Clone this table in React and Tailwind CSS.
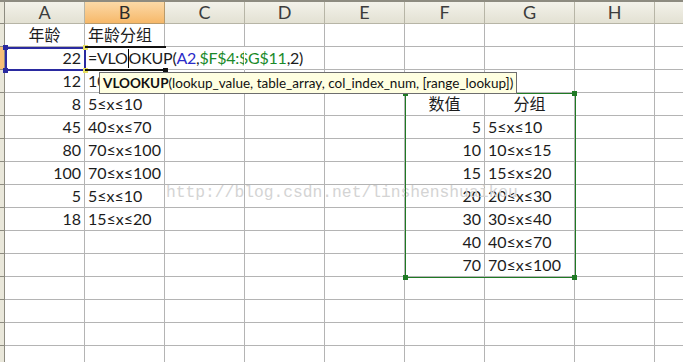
import React from 'react'

// column letters with their widths, as in the sheet
const COLS = [
  { key: 'A', w: 'w-[80px]' },
  { key: 'B', w: 'w-[80px]' },
  { key: 'C', w: 'w-[80px]' },
  { key: 'D', w: 'w-[80px]' },
  { key: 'E', w: 'w-[80px]' },
  { key: 'F', w: 'w-[80px]' },
  { key: 'G', w: 'w-[90px]' },
  { key: 'H', w: 'w-[80px]' },
  { key: 'I', w: 'w-[80px]' },
]

const FORMULA = 'formula'

// [A, B, F, G]
const ROWS = [
  ['年龄', '年龄分组', '', ''],
  ['22', FORMULA, '', ''],
  ['12', '10≤x≤15', '', ''],
  ['8', '5≤x≤10', '数值', '分组'],
  ['45', '40≤x≤70', '5', '5≤x≤10'],
  ['80', '70≤x≤100', '10', '10≤x≤15'],
  ['100', '70≤x≤100', '15', '15≤x≤20'],
  ['5', '5≤x≤10', '20', '20≤x≤30'],
  ['18', '15≤x≤20', '30', '30≤x≤40'],
  ['', '', '40', '40≤x≤70'],
  ['', '', '70', '70≤x≤100'],
  ['', '', '', ''],
  ['', '', '', ''],
  ['', '', '', ''],
  ['', '', '', ''],
]

const isNum = (v) => /^\d+$/.test(v)

const Formula = () => (
  <span className="whitespace-nowrap tracking-[-0.25px]">
    =VLO<span className="inline-block w-px h-[19px] bg-black align-[-4px]" />OKUP(
    <span className="text-[#2b2bc8]">A2</span>,
    <span className="text-[#1a8a2a]">$F$4:$G$11</span>,2)
  </span>
)

// noRight: text overflowing from the left hides the gridline
const Cell = ({ value, w, noRight }) => {
  const cjk = value === '年龄' || value === '数值' || value === '分组'
  let align = 'justify-start pl-[3px]'
  if (isNum(value)) align = 'justify-end pr-[3px]'
  else if (cjk) align = 'justify-center'
  return (
    <div
      className={`${w} shrink-0 h-[23px] border-b flex items-center overflow-visible border-[#b4b4b4] ${
        noRight ? 'border-r border-r-white' : 'border-r'
      } ${align}`}
    >
      {value === FORMULA ? <Formula /> : <span className="whitespace-nowrap">{value}</span>}
    </div>
  )
}

const Handle = ({ className }) => <div className={`absolute w-[5px] h-[5px] ${className}`} />

export default function App() {
  return (
    <div className="w-[683px] h-[362px] overflow-hidden bg-white font-['Lato','Noto_Sans_CJK_SC',sans-serif] text-[16px] text-[#1c1c1c]">
      <div className="relative w-max">
        {/* column header */}
        <div className="flex h-[24px] border-t-2 border-[#8d8b80]">
          <div className="w-[5px] shrink-0 bg-[#e9e7da] border-r border-b border-[#8d8b80]" />
          {COLS.map((c) => (
            <div
              key={c.key}
              className={`${c.w} shrink-0 flex items-center justify-center border-r border-b text-[18px] ${
                c.key === 'B'
                  ? 'bg-linear-to-b from-[#fbd9a6] to-[#f6b869] border-[#b99a6a] text-[#2a2a2a]'
                  : 'bg-linear-to-b from-[#f3f2ea] to-[#e3e1d3] border-[#b7b5a6] text-[#3c3c3c]'
              }`}
            >
              {c.key === 'I' ? '' : c.key}
            </div>
          ))}
        </div>

        {/* rows */}
        {ROWS.map((r, i) => (
          <div key={i} className="flex">
            <div
              className={`w-[5px] shrink-0 h-[23px] border-r border-b border-[#8d8b80] ${
                i === 1 ? 'bg-[#f6bf78]' : 'bg-[#e9e7da]'
              }`}
            />
            <Cell value={r[0]} w="w-[80px]" />
            <Cell value={r[1]} w="w-[80px]" noRight={i === 1} />
            <Cell value="" w="w-[80px]" noRight={i === 1} />
            <Cell value="" w="w-[80px]" />
            <Cell value="" w="w-[80px]" />
            <Cell value={r[2]} w="w-[80px]" />
            <Cell value={r[3]} w="w-[90px]" />
            <Cell value="" w="w-[80px]" />
            <Cell value="" w="w-[80px]" />
          </div>
        ))}

        {/* watermark */}
        <div className="absolute left-[166px] top-[181px] font-['Liberation_Mono',monospace] text-[16.3px] text-[#d4d4d4] whitespace-nowrap pointer-events-none">
          http://blog.csdn.net/linshenshuaikou
        </div>

        {/* A2 reference box (blue) */}
        <div className="absolute left-[5px] top-[47px] w-[81px] h-[24px] border-2 border-[#2a2aa0] pointer-events-none" />
        <Handle className="left-[3px] top-[45px] bg-[#2a2aa0]" />
        <Handle className="left-[3px] top-[68px] bg-[#2a2aa0]" />
        <Handle className="left-[83px] top-[45px] bg-[#e8e060]" />
        <Handle className="left-[83px] top-[68px] bg-[#e8e060]" />

        {/* B2 active cell */}
        <div className="absolute left-[85px] top-[46px] w-[81px] h-[25px] border-y-2 border-[#111] pointer-events-none" />
        <Handle className="left-[163px] top-[68px] bg-[#111]" />

        {/* F4:G11 reference box (green) */}
        <div className="absolute left-[405px] top-[93px] w-[171px] h-[185px] border border-[#1f7a24] pointer-events-none" />
        <Handle className="left-[403px] top-[91px] bg-[#1f7a24]" />
        <Handle className="left-[572px] top-[91px] bg-[#1f7a24]" />
        <Handle className="left-[403px] top-[275px] bg-[#1f7a24]" />
        <Handle className="left-[572px] top-[275px] bg-[#1f7a24]" />

        {/* function tooltip */}
        <div className="absolute left-[99px] top-[72px] h-[22px] px-[3px] flex items-center bg-[#ffffe1] border border-[#6e6e6e] text-[13.5px] text-[#111] whitespace-nowrap">
          <span className="font-bold">VLOOKUP</span>
          (lookup_value, table_array, col_index_num, [range_lookup])
        </div>
      </div>
    </div>
  )
}
